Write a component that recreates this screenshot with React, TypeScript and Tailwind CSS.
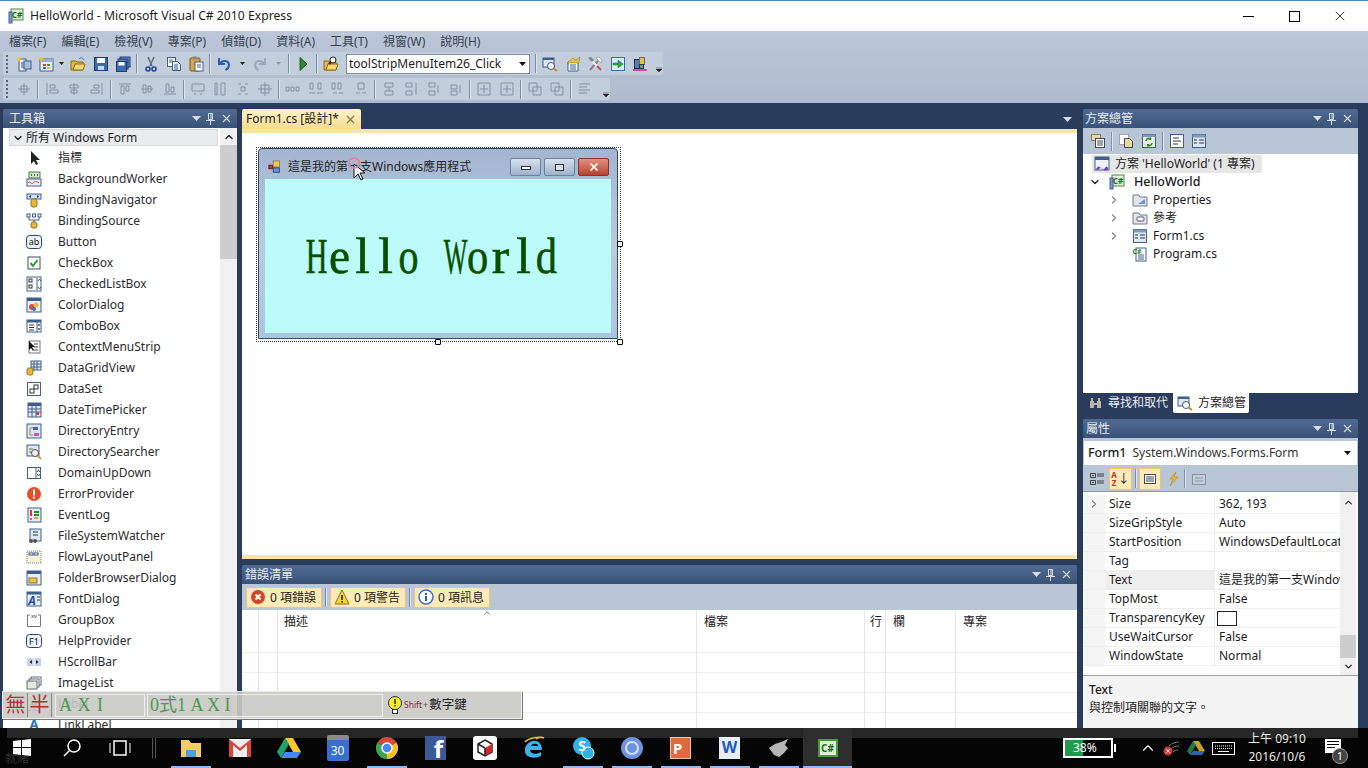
import React from "react";
import { ChevronDown, ChevronRight, ChevronUp, X } from "lucide-react";

const font = "font-['Noto_Sans','Noto_Sans_CJK_TC',sans-serif]";

// 16x16 glyphs for toolbox / toolbar items
function Glyph({ name, size = 16 }: { name: string; size?: number }) {
  const b = "#3f5f8a";
  const parts: Record<string, React.ReactNode> = {
    pointer: <path d="M5 1v13l3-3 2 4 2-1-2-4h4z" fill="#222" />,
    worker: <><rect x="3" y="1" width="11" height="6" fill="#cfe6c8" stroke="#5a7a5a" /><path d="M5 4h1M8 4h1M11 4h1" stroke="#2a8a2a" strokeWidth="2" /><rect x="1" y="8" width="14" height="7" fill="#eef" stroke={b} /><path d="M2 12c2-3 3 2 5 0s3-2 6 0" stroke="#d33" fill="none" /></>,
    nav: <><rect x="1" y="2" width="14" height="5" fill="#cfe0f5" stroke={b} /><path d="M5 3L3 4.500 5 6zM11 3l2 1.500L11 6z" fill="#234" /><rect x="5" y="7" width="6" height="8" rx="2" fill="#e5b93c" stroke="#94741b" /></>,
    source: <><path d="M3 3v4h10V3M8 7v3" stroke={b} fill="none" /><rect x="1" y="1" width="3" height="3" fill="#fff" stroke={b} /><rect x="6.500" y="1" width="3" height="3" fill="#fff" stroke={b} /><rect x="12" y="1" width="3" height="3" fill="#fff" stroke={b} /><rect x="5" y="9" width="6" height="6" rx="2" fill="#e5b93c" stroke="#94741b" /></>,
    button: <><rect x="0.500" y="1.500" width="15" height="13" rx="3" fill="#eef2f8" stroke="#27456e" /><text x="8" y="11" fontSize="9" textAnchor="middle" fill="#111">ab</text></>,
    check: <><rect x="2" y="2" width="12" height="12" fill="#fff" stroke="#3a4d6a" /><path d="M4.500 8l2.500 3 4.500-6" stroke="#2a9a2a" strokeWidth="2" fill="none" /></>,
    list: <><rect x="1" y="1" width="14" height="14" fill="#fff" stroke={b} /><rect x="3" y="3" width="3" height="3" fill="none" stroke="#333" /><rect x="3" y="9" width="3" height="3" fill="none" stroke="#333" /><path d="M11 2v12" stroke={b} /><path d="M12 5l1.500-2L15 5M12 11l1.500 2 1.500-2" stroke="#555" fill="none" /></>,
    color: <><rect x="1" y="1" width="14" height="14" fill="#e5edf8" stroke={b} /><rect x="1" y="1" width="14" height="3" fill={b} /><circle cx="6" cy="10" r="3" fill="#d84a3a" /><circle cx="10" cy="8" r="2.500" fill="#e8b83a" /><circle cx="8" cy="12" r="2" fill="#3a6fd8" /></>,
    combo: <><rect x="1" y="2" width="14" height="12" fill="#fff" stroke={b} /><rect x="1" y="2" width="14" height="2.500" fill={b} /><path d="M3 7h5M3 9.500h5M3 12h5" stroke="#333" /><path d="M11 4v10" stroke={b} /><path d="M12 8l1-2 1 2M12 10l1 2 1-2" stroke="#555" fill="none" /></>,
    context: <><rect x="3" y="2" width="11" height="12" fill="#fff" stroke="#777" /><path d="M8 5h4M8 8h4M8 11h4" stroke="#444" /><path d="M3 2v9l2-2 2 3 1-1-2-3h3z" fill="#111" /></>,
    grid: <><rect x="5" y="1" width="10" height="9" fill="#dfe8f5" stroke={b} /><path d="M5 4h10M5 7h10M8 1v9M11 1v9" stroke={b} /><rect x="1" y="8" width="6" height="7" rx="2" fill="#e5b93c" stroke="#94741b" /></>,
    dataset: <><rect x="1.500" y="1.500" width="13" height="13" fill="#fff" stroke={b} /><rect x="4" y="8" width="4" height="4" fill="#fff" stroke="#333" /><rect x="8" y="4" width="4" height="4" fill="#fff" stroke="#333" /></>,
    date: <><rect x="2" y="1" width="13" height="14" fill="#dde6f2" stroke={b} /><rect x="2" y="1" width="13" height="3" fill={b} /><path d="M2 7h13M2 10h13M6 4v11M10 4v11" stroke={b} /><rect x="10" y="10" width="3" height="3" fill="#d04a3a" /></>,
    entry: <><rect x="1" y="1" width="14" height="14" fill="#dbe7f7" stroke={b} /><path d="M4 5v7h3M7 5H4" stroke="#b4862a" fill="none" /><rect x="7" y="4" width="5" height="3" fill="#46a" /><rect x="8" y="10" width="5" height="3" fill="#b5c" /></>,
    searcher: <><rect x="1" y="1" width="12" height="11" fill="#dbe7f7" stroke={b} /><circle cx="9" cy="9" r="3.500" fill="#eef" stroke="#555" /><path d="M12 12l3 3" stroke="#c9a23b" strokeWidth="2" /><path d="M3 5h4M3 8h3" stroke="#8a6a20" /></>,
    updown: <><rect x="1.500" y="2.500" width="13" height="11" fill="#fff" stroke={b} /><path d="M10 3v10" stroke={b} /><path d="M11 7l1.500-2 1.500 2M11 9l1.500 2 1.500-2" stroke="#444" fill="none" /></>,
    error: <><circle cx="8" cy="8" r="7" fill="#e2502a" /><rect x="7" y="3.500" width="2" height="6" fill="#fff" /><rect x="7" y="10.500" width="2" height="2" fill="#fff" /></>,
    eventlog: <><rect x="2" y="1" width="13" height="14" fill="#e3ecf7" stroke={b} /><path d="M5 3v6" stroke="#d33" strokeWidth="2" /><circle cx="5" cy="12" r="1" fill="#d33" /><path d="M8 5h5M8 8h5" stroke="#2a8a2a" strokeWidth="2" /><path d="M8 11h4" stroke="#c9a23b" strokeWidth="2" /></>,
    watcher: <><rect x="4" y="1" width="11" height="12" fill="#dbe7f7" stroke={b} /><circle cx="5" cy="13" r="2" fill="#555" /><circle cx="9" cy="13" r="2" fill="#555" /><path d="M7 4h5M7 7h5" stroke="#333" /></>,
    flow: <><rect x="1" y="2" width="14" height="12" fill="#f3f3dd" stroke="#777" strokeDasharray="1 1" /><rect x="3" y="4" width="4" height="2" fill="#fff" stroke={b} /><rect x="8" y="4" width="4" height="2" fill="#fff" stroke={b} /></>,
    folder: <><rect x="1" y="1" width="14" height="14" fill="#e6eef8" stroke={b} /><rect x="1" y="1" width="14" height="3" fill={b} /><rect x="3" y="8" width="8" height="5" fill="#ecc654" stroke="#94741b" /></>,
    fontd: <><rect x="1" y="1" width="14" height="14" fill="#e6eef8" stroke={b} /><rect x="1" y="1" width="14" height="2.500" fill={b} /><text x="6" y="14" fontSize="12" fontWeight="700" fontStyle="italic" fill="#1b4fa8" textAnchor="middle">A</text><path d="M11 6h3M11 9h3" stroke="#333" /></>,
    group: <><path d="M4 3H1.500v11.500h13V3H12" stroke="#777" fill="none" /><text x="8" y="6" fontSize="6" textAnchor="middle" fill="#333">xv</text></>,
    help: <><rect x="0.500" y="1.500" width="15" height="13" rx="3" fill="#eef2f8" stroke="#27456e" /><text x="8" y="11.500" fontSize="9" textAnchor="middle" fill="#111">F1</text></>,
    hscroll: <><rect x="1" y="4" width="14" height="8" fill="#c5d4ea" /><path d="M6 6L3.500 8 6 10z" fill="#223" /><path d="M10 6l2.500 2L10 10z" fill="#223" /><path d="M8 4v8" stroke="#fff" /></>,
    images: <><rect x="5" y="2" width="10" height="8" fill="#fff" stroke="#667" /><rect x="3" y="4" width="10" height="8" fill="#fff" stroke="#667" /><rect x="1" y="6" width="10" height="8" fill="#e4eedd" stroke="#667" /></>,
    link: <><text x="8" y="12" fontSize="13" fontWeight="700" textAnchor="middle" fill="#2a6fb8">A</text><path d="M2 14.500h12" stroke="#2a4f9a" /></>,
    newproj: <><rect x="3" y="3" width="7" height="12" fill="#e8eef6" stroke={b} /><rect x="8" y="5" width="7" height="8" fill="#a9bedc" stroke={b} /><path d="M5 7h3M5 9h3M5 11h3" stroke={b} /><path d="M3 0l1 2 2 1-2 1-1 2-1-2-2-1 2-1z" fill="#f2c220" /></>,
    addwin: <><rect x="2" y="3" width="13" height="12" fill="#e8edf5" stroke={b} /><rect x="2" y="3" width="13" height="3" fill="#9ab0cf" /><rect x="5" y="8" width="3" height="2" fill="#d33" /><rect x="9" y="8" width="3" height="2" fill="#3a9a3a" /><rect x="5" y="11" width="3" height="2" fill="#36c" /><rect x="9" y="11" width="3" height="2" fill="#e8b83a" /><path d="M3 0l1 2 2 1-2 1-1 2-1-2-2-1 2-1z" fill="#f2c220" /></>,
    open: <><path d="M1 5h5l1 1h6v8H1z" fill="#e6b63e" stroke="#8a6a18" /><path d="M3 14l2-6h10l-2 6z" fill="#f5d871" stroke="#8a6a18" /><path d="M9 3c2-2 4-1 5 1" stroke="#3a6fc4" fill="none" /></>,
    save: <><rect x="1.500" y="1.500" width="13" height="13" fill="#3e69b4" stroke="#1c3c78" /><rect x="4" y="2" width="8" height="5" fill="#fff" /><rect x="5" y="10" width="6" height="4" fill="#ccd6e6" /></>,
    saveall: <><rect x="5" y="1" width="10" height="10" fill="#6f8fc8" stroke="#1c3c78" /><rect x="3" y="3" width="10" height="10" fill="#5a7cbc" stroke="#1c3c78" /><rect x="1.500" y="5.500" width="10" height="10" fill="#3e69b4" stroke="#1c3c78" /><rect x="3.500" y="6" width="6" height="3.500" fill="#fff" /></>,
    cut: <><path d="M5 1l4 9M11 1L7 10" stroke="#667" strokeWidth="1.500" /><circle cx="5" cy="13" r="2" fill="none" stroke="#24408c" strokeWidth="1.500" /><circle cx="11" cy="13" r="2" fill="none" stroke="#24408c" strokeWidth="1.500" /></>,
    copy: <><rect x="1.500" y="1.500" width="8" height="9" fill="#fff" stroke={b} /><path d="M3 4h4M3 6h4" stroke={b} /><path d="M6.500 5.500h5l3 3v6h-8z" fill="#eef4fb" stroke={b} /><path d="M8 9h4M8 11h4M8 13h4" stroke={b} /></>,
    paste: <><rect x="2" y="2" width="10" height="13" rx="1" fill="#d4a84a" stroke="#7a5a18" /><rect x="5" y="0.500" width="4" height="3" fill="#888" /><rect x="7" y="6" width="8" height="9" fill="#fff" stroke={b} /><path d="M9 9h4M9 11h4" stroke={b} /></>,
    undo: <path d="M3 2v6h6M3.500 8C6 3.500 13 4 13 9c0 2.500-1.500 4-3.500 5" stroke="#2c5cb0" strokeWidth="2" fill="none" />,
    redo: <path d="M13 2v6H7M12.500 8C10 3.500 3 4 3 9c0 2.500 1.500 4 3.500 5" stroke="#9aa8bb" strokeWidth="2" fill="none" />,
    run: <path d="M5 1.500l7 6.500-7 6.500z" fill="#2f8a2f" stroke="#1c5c1c" />,
    find: <><path d="M1 5h5l1 1h6v8H1z" fill="#e6b63e" stroke="#8a6a18" /><path d="M3 14l2-6h10l-2 6z" fill="#f5d871" stroke="#8a6a18" /><circle cx="10" cy="4" r="3" fill="#fff" stroke="#222" /><path d="M8 6l-2 2" stroke="#222" strokeWidth="2" /></>,
    sol: <><rect x="1" y="2" width="11" height="9" fill="#dce6f4" stroke={b} /><rect x="1" y="2" width="11" height="2" fill={b} /><circle cx="9" cy="10" r="3.500" fill="#fff" stroke="#456" /><path d="M11.500 12.500L15 15" stroke="#c08a28" strokeWidth="2" /></>,
    props: <><path d="M3 6h10v9H3z" fill="#fff" stroke={b} /><path d="M5 9h6M5 11h6M5 13h6" stroke={b} /><path d="M2 7L8 2l3 2 4-3-1 6H9z" fill="#e5c04c" stroke="#8a6a18" strokeWidth="0.500" /></>,
    tools: <><path d="M3 14L11 5" stroke="#7f858d" strokeWidth="2" /><path d="M9 2l5 5 1-3-3-3z" fill="#eef0f2" stroke="#7f858d" strokeWidth="0.500" /><path d="M4 4L13 13" stroke="#eef0f2" strokeWidth="2" /><path d="M10 10L14 14" stroke="#c2503f" strokeWidth="2" /><path d="M1 2l3-1 3 3-2 2z" fill="#7f858d" /></>,
    ext: <><rect x="1.500" y="1.500" width="13" height="13" fill="#dcefff" stroke="#3b6b9a" /><path d="M3 7h5V4l5 4-5 4V9H3z" fill="#27a83a" stroke="#14691f" strokeWidth="0.500" /></>,
    layers: <><rect x="2.500" y="3.500" width="5" height="9" fill="#4a7fc8" stroke="#234" /><rect x="7.500" y="1.500" width="5" height="7" fill="#e8bf3a" stroke="#765" /><rect x="7.500" y="8.500" width="4" height="4" fill="#5aa85a" stroke="#234" /><rect x="1" y="13" width="14" height="2" fill="#c84fae" /></>,
    app: <><rect x="1" y="6" width="4" height="4" fill="#c93d2f" stroke="#512" /><rect x="6" y="1" width="7" height="7" fill="#f2c84b" stroke="#876" /><rect x="6" y="9" width="7" height="5" fill="#6d93d4" stroke="#246" /></>,
    csproj: <><rect x="3" y="1" width="12" height="11" fill="#dff0d8" stroke="#4a8a3a" /><text x="9" y="10" fontSize="8" fontWeight="700" textAnchor="middle" fill="#1d6b1d">C#</text><rect x="1" y="4" width="3" height="11" fill="#7d9cc9" stroke={b} /></>,
    solution: <><rect x="1" y="1" width="14" height="13" fill="#eef3fa" stroke={b} /><rect x="1" y="1" width="14" height="3" fill={b} /><path d="M2 13c2-3 3-3 4.500-1.500S10 14 11 12s2-2 3 0-3 3-4 2-3-3-4.500-1.500S3 15 2 13z" fill="#7d3fb8" /></>,
    pfolder: <><path d="M1 3h6l1 2h7v9H1z" fill="#dfe6ef" stroke="#778" /><path d="M6 12l7-5v5z" fill="#6c93d8" /></>,
    rfolder: <><path d="M1 3h6l1 2h7v9H1z" fill="#dfe6ef" stroke="#778" /><rect x="5" y="7" width="7" height="4" rx="1" fill="#fff" stroke="#556" /></>,
    form: <><rect x="1.500" y="1.500" width="13" height="13" fill="#dde8f6" stroke={b} /><rect x="1.500" y="1.500" width="13" height="3" fill="#7e9bc4" /><path d="M3 7h3M3 10h3M8 7h5M8 10h5" stroke="#334" /></>,
    cscode: <><rect x="4" y="2" width="10" height="13" fill="#fff" stroke={b} /><path d="M6 9h6M6 11h6M6 13h6" stroke={b} /><text x="5" y="8" fontSize="7" fontWeight="700" textAnchor="middle" fill="#1d7a1d">C#</text></>,
    slnprops: <><rect x="1.500" y="1.500" width="9" height="6" fill="#e8d9a8" stroke="#8a7a50" /><rect x="5.500" y="5.500" width="9" height="9" fill="#fff" stroke="#445" /><path d="M7 8h6M7 10h6M7 12h6" stroke="#445" /></>,
    showall: <><rect x="1.500" y="1.500" width="9" height="10" fill="#fff" stroke="#667" strokeDasharray="1 1" /><path d="M6.500 5.500h5l3 3v6h-8z" fill="#e9d9a0" stroke="#445" /></>,
    refresh: <><rect x="1.500" y="1.500" width="13" height="13" fill="#e8f0dc" stroke={b} /><rect x="1.500" y="1.500" width="13" height="2.500" fill="#7e9bc4" /><path d="M5 8a3 3 0 0 1 5-2M11 10a3 3 0 0 1-5 2" stroke="#2f8a2f" strokeWidth="1.500" fill="none" /><path d="M10 4v3H7M6 14v-3h3" fill="#2f8a2f" /></>,
    viewcode: <><rect x="1.500" y="1.500" width="13" height="13" fill="#fff" stroke={b} /><path d="M4 5h6M4 8h8M4 11h5" stroke="#334" /></>,
  };
  return (
    <svg width={size} height={size} viewBox="0 0 16 16" className="shrink-0">
      {parts[name]}
    </svg>
  );
}

// gray alignment glyphs of the second toolbar
function AlignGlyph({ d }: { d: string }) {
  return (
    <svg width="16" height="16" viewBox="0 0 16 16" className="shrink-0">
      <path d={d} stroke="#8491a3" fill="none" />
    </svg>
  );
}

function Sep() {
  return <div className="w-px h-[19px] bg-[#7f8ea3] border-r border-[#dfe5ee] shrink-0 box-content -mx-[1.500px]" />;
}

function Grip() {
  return (
    <div className="flex flex-col gap-[2px] w-[3px] shrink-0">
      {[0, 1, 2, 3, 4].map((i) => (
        <div key={i} className="w-[2px] h-[2px] bg-[#55657c]" />
      ))}
    </div>
  );
}

function Overflow({ cls }: { cls: string }) {
  return (
    <svg width="6" height="6" viewBox="0 0 6 6" className={`self-end mb-[2px] ${cls}`}>
      <path d="M0 0h6M0 2h6L3 5z" fill="#222" stroke="#222" strokeWidth="0.500" />
    </svg>
  );
}

function PanelTitle({ title, pad = "pl-[6px]" }: { title: string; pad?: string }) {
  return (
    <div className={`h-[19px] shrink-0 flex items-center pr-[4px] rounded-t-[2px] bg-gradient-to-b from-[#4f6a92] to-[#3a5278] text-[#e8edf4] text-[12px] ${pad}`}>
      <span className="flex-1 pt-[1px]">{title}</span>
      <svg width="9" height="5" viewBox="0 0 9 5" className="mr-[5px]"><path d="M0 0h9L4.500 5z" fill="#d5dde8" /></svg>
      <svg width="9" height="12" viewBox="0 0 9 12" className="mr-[5px]"><path d="M2.500 0.500h4v6h-4zM0 7.500h9M4.500 8v4M5 1v5" stroke="#d5dde8" fill="none" /></svg>
      <X size={13} className="text-[#d5dde8]" strokeWidth={2} />
    </div>
  );
}

const tools: [string, string][] = [
  ["pointer", "指標"], ["worker", "BackgroundWorker"], ["nav", "BindingNavigator"], ["source", "BindingSource"],
  ["button", "Button"], ["check", "CheckBox"], ["list", "CheckedListBox"], ["color", "ColorDialog"],
  ["combo", "ComboBox"], ["context", "ContextMenuStrip"], ["grid", "DataGridView"], ["dataset", "DataSet"],
  ["date", "DateTimePicker"], ["entry", "DirectoryEntry"], ["searcher", "DirectorySearcher"], ["updown", "DomainUpDown"],
  ["error", "ErrorProvider"], ["eventlog", "EventLog"], ["watcher", "FileSystemWatcher"], ["flow", "FlowLayoutPanel"],
  ["folder", "FolderBrowserDialog"], ["fontd", "FontDialog"], ["group", "GroupBox"], ["help", "HelpProvider"],
  ["hscroll", "HScrollBar"], ["images", "ImageList"], ["link", "Label"], ["link", "LinkLabel"],
];

const props: [string, string][] = [
  ["Size", "362, 193"], ["SizeGripStyle", "Auto"], ["StartPosition", "WindowsDefaultLocation"], ["Tag", ""],
  ["Text", "這是我的第一支Windows應用程式"], ["TopMost", "False"], ["TransparencyKey", ""], ["UseWaitCursor", "False"], ["WindowState", "Normal"],
];

const alignA = ["M2 8h12M8 2v12M5 5h6v6H5z"];
const alignB = ["M3 2v12M6 4h5v3H6zM6 9h8v3H6z", "M8 2v12M4 4h8v3H4zM5 9h6v3H5z", "M13 2v12M5 4h5v3H5zM2 9h8v3H2z"];
const alignC = ["M2 3h12M4 5h3v8H4zM9 5h3v5H9z", "M2 8h12M4 4h3v8H4zM9 5h3v6H9z", "M2 13h12M4 3h3v8H4zM9 6h3v5H9z"];
const alignD = ["M2 3h12v7H2zM4 13h2M10 13h2", "M3 2h2v12H3zM9 2h4v12H9z", "M3 3h3M10 3h3M3 13h3M10 13h3M6 6h4v4H6z", "M4 4h8v8H4zM8 1v14M1 8h14"];
const alignE = ["M1 6h3v4H1zM6 6h3v4H6zM11 6h3v4h-3z", "M2 2h3v6H2zM10 2h3v6h-3zM1 12h6M9 12h6", "M2 2h3v6H2zM8 2h3v6H8zM3 12h4M9 12h4", "M5 2h6v6H5zM3 12h4M9 12h4"];
const alignF = ["M4 2h8v4H4zM4 10h8v4H4zM8 6v4", "M3 2h6v4H3zM3 10h6v4H3zM13 2v12", "M3 2h6v4H3zM3 10h6v4H3zM12 4v8", "M3 4h6v4H3zM3 10h6v4H3zM12 4v8"];

function AlignRow({ list }: { list: string[] }) {
  return (
    <div className="flex items-center gap-[6.500px]">
      {list.map((d, i) => (
        <AlignGlyph key={i} d={d} />
      ))}
    </div>
  );
}

function Arrow({ color = "#222", cls = "" }: { color?: string; cls?: string }) {
  return (
    <svg width="5" height="3" viewBox="0 0 5 3" className={cls}>
      <path d="M0 0h5L2.500 3z" fill={color} />
    </svg>
  );
}

// form caption letters sit in fixed cells, like the monospaced serif in the picture
const hello: { c: string; cls: string }[] = [
  { c: "H", cls: "scale-x-[0.6]" },
  { c: "e", cls: "scale-x-[0.95]" },
  { c: "l", cls: "scale-x-[1.05]" },
  { c: "l", cls: "scale-x-[1.05]" },
  { c: "o", cls: "scale-x-[0.8]" },
  { c: "\u00a0", cls: "" },
  { c: "W", cls: "scale-x-[0.5]" },
  { c: "o", cls: "scale-x-[0.85]" },
  { c: "r", cls: "scale-x-[1.05]" },
  { c: "l", cls: "scale-x-[1.05]" },
  { c: "d", cls: "scale-x-[0.85]" },
];

function TaskIcon({ children, active, current }: { children: React.ReactNode; active?: boolean; current?: boolean }) {
  return (
    <div className={`w-[49px] h-[40px] flex items-center justify-center relative ${current ? "bg-[#2e2e2e]" : ""}`}>
      {children}
      {active && <div className={`absolute bottom-0 h-[2px] bg-[#8fb8f0] ${current ? "left-0 right-0" : "left-[5px] right-[4px]"}`} />}
    </div>
  );
}

export default function App() {
  return (
    <div lang="zh-TW" className={`w-[1368px] h-[768px] relative overflow-hidden flex flex-col bg-[#2a3c5c] text-[#1c1c1c] ${font}`}>
      {/* title bar */}
      <div className="h-[31px] shrink-0 bg-white border-t border-[#4f86c6] flex items-center pl-[8px] pr-[5px] text-[12.200px]">
        <Glyph name="csproj" />
        <span className="ml-[6px] flex-1">HelloWorld - Microsoft Visual C# 2010 Express</span>
        <div className="w-[46px] flex justify-center"><div className="w-[11px] h-px bg-black" /></div>
        <div className="w-[46px] flex justify-center"><div className="w-[11px] h-[11px] border border-black" /></div>
        <div className="w-[46px] flex justify-center"><X size={16} strokeWidth={1.200} className="text-black" /></div>
      </div>

      {/* menu + toolbars */}
      <div className="h-[72px] shrink-0 bg-gradient-to-b from-[#bcc7d8] to-[#aebbce] pt-[1px]">
        <div className="h-[19px] flex items-center gap-[15px] pl-[9px] text-[12px] text-[#333f50]">
          {["檔案(F)", "編輯(E)", "檢視(V)", "專案(P)", "偵錯(D)", "資料(A)", "工具(T)", "視窗(W)", "說明(H)"].map((m) => (
            <span key={m}>{m}</span>
          ))}
        </div>
        <div className="h-[23px] mt-[1px] ml-[3px] w-[660px] bg-[#c3cedd] rounded-[2px] flex items-center pl-[3px] gap-[6.500px]">
          <Grip />
          <Glyph name="newproj" />
          <Glyph name="addwin" />
          <Arrow cls="-ml-[2px]" />
          <Glyph name="open" />
          <Glyph name="save" />
          <Glyph name="saveall" />
          <Sep />
          <Glyph name="cut" />
          <Glyph name="copy" />
          <Glyph name="paste" />
          <Sep />
          <Glyph name="undo" />
          <Arrow cls="mx-[1px]" />
          <Glyph name="redo" />
          <Arrow color="#8c97a6" cls="ml-[1px] mr-[2px]" />
          <Sep />
          <Glyph name="run" />
          <Sep />
          <Glyph name="find" />
          <div className="w-[184px] h-[20px] bg-white border border-[#7f8ea3] flex items-center pl-[2px] text-[12px] ml-[1px] shrink-0">
            <span className="flex-1">toolStripMenuItem26_Click</span>
            <svg width="7" height="4" viewBox="0 0 7 4" className="mr-[3px]"><path d="M0 0h7L3.500 4z" fill="#111" /></svg>
          </div>
          <Sep />
          <Glyph name="sol" />
          <Glyph name="props" />
          <Glyph name="tools" />
          <Glyph name="ext" />
          <Glyph name="layers" />
          <Overflow cls="ml-[1px]" />
        </div>
        <div className="h-[22px] mt-[3px] ml-[3px] w-[607px] bg-[#c3cedd] rounded-[2px] flex items-center pl-[3px] gap-[6.500px]">
          <Grip />
          <AlignRow list={alignA} />
          <Sep />
          <AlignRow list={alignB} />
          <Sep />
          <AlignRow list={alignC} />
          <Sep />
          <AlignRow list={alignD} />
          <Sep />
          <AlignRow list={alignE} />
          <Sep />
          <AlignRow list={alignF} />
          <Sep />
          <AlignRow list={["M2 2h12v12H2zM8 4v8M4 8h8", "M2 2h12v12H2zM8 4v8M4 8h8"]} />
          <Sep />
          <AlignRow list={["M2 2h8v8H2zM6 6h8v8H6z", "M2 2h8v8H2zM6 6h8v8H6z"]} />
          <Sep />
          <AlignRow list={["M2 3h11M2 6h8M2 9h11M2 12h8"]} />
          <Overflow cls="ml-[3px]" />
        </div>
      </div>

      {/* dock area */}
      <div className="flex-1 min-h-0 flex pl-[3px] pt-[6px] pr-[10px] gap-[5px]">
        {/* toolbox */}
        <div className="w-[234px] shrink-0 flex flex-col">
          <PanelTitle title="工具箱" />
          <div className="flex-1 min-h-0 bg-white flex relative overflow-hidden">
            <div className="flex-1 min-w-0 pt-[1px]">
              <div className="ml-[6px] mr-[2px] h-[17px] bg-[#e8ecee] border border-[#d5d9dd] flex items-center text-[12px]">
                <ChevronDown size={12} strokeWidth={2.500} className="ml-[2px] mr-[2px]" />
                所有 Windows Form
              </div>
              <div className="pt-[1px]">
                {tools.map(([icon, label], i) => (
                  <div key={i} className="h-[21px] flex items-center pl-[23px] text-[12px] text-[#2c2c2c]">
                    <Glyph name={icon} />
                    <span className="ml-[16px]">{label}</span>
                  </div>
                ))}
              </div>
            </div>
            <div className="w-[17px] shrink-0 bg-[#f0f0f0] flex flex-col items-center">
              <ChevronUp size={12} strokeWidth={2.500} className="mt-[3px] mb-[2px]" />
              <div className="w-full h-[114px] bg-[#cdcdcd]" />
            </div>
          </div>
        </div>

        {/* center column */}
        <div className="flex-1 min-w-0 flex flex-col mr-[1px]">
          <div className="h-[20px] shrink-0 flex items-end">
            <div className="w-[119px] h-[20px] bg-gradient-to-b from-[#fdf3c8] to-[#f8dc8f] rounded-t-[2px] flex items-center pl-[4px] text-[12px]">
              <span className="flex-1">Form1.cs [設計]*</span>
              <X size={13} strokeWidth={2.500} className="text-[#8a7a50] mr-[4px]" />
            </div>
            <div className="flex-1 flex justify-end items-center h-full pr-[5px]">
              <svg width="9" height="5" viewBox="0 0 9 5"><path d="M0 0h9L4.500 5z" fill="#d5dde8" /></svg>
            </div>
          </div>
          <div className="h-[4px] shrink-0 bg-[#f8e4a8]" />
          <div className="h-[422px] shrink-0 bg-white pl-[14px] pt-[14px]">
            {/* designed form with selection frame */}
            <div className="relative w-[365px] h-[195px] border border-dotted border-[#444] pl-[1px] pt-[0px] pr-[2px] pb-[2px]">
              <div className="w-full h-full rounded-t-[4px] border border-[#2f4a66] bg-gradient-to-b from-[#a4b6d0] via-[#b9cbdf] to-[#acc6df] flex flex-col px-[6px] pb-[5px]">
                <div className="h-[30px] shrink-0 flex items-center text-[12px] pl-[3px] text-[#222]">
                  <span className="mt-[5px]"><Glyph name="app" size={14} /></span>
                  <span className="ml-[6px] flex-1 pt-[5px]">這是我的第一支Windows應用程式</span>
                  <div className="w-[31px] h-[18px] mr-[3px] mt-[6px] rounded-[2px] border border-[#6f819b] bg-gradient-to-b from-[#d8e1ee] to-[#9fb2cd] flex items-center justify-center">
                    <div className="w-[10px] h-[4px] border border-[#333] bg-white mt-[2px]" />
                  </div>
                  <div className="w-[31px] h-[18px] mr-[3px] mt-[6px] rounded-[2px] border border-[#6f819b] bg-gradient-to-b from-[#d8e1ee] to-[#9fb2cd] flex items-center justify-center">
                    <div className="w-[9px] h-[7px] border border-[#333] bg-[#d8e1ee]" />
                  </div>
                  <div className="w-[31px] h-[18px] mr-[2px] mt-[6px] rounded-[2px] border border-[#7a3a30] bg-gradient-to-b from-[#e09080] to-[#b8402c] flex items-center justify-center">
                    <X size={12} strokeWidth={3.500} className="text-white" />
                  </div>
                </div>
                <div className="flex-1 bg-[#bbfcfb] flex items-center pl-[40px] font-['Liberation_Serif',serif] text-[50px] leading-none text-[#0a4f00] [-webkit-text-stroke:0.6px_#0a4f00]">
                  {hello.map((l, i) => (
                    <span key={i} className={`inline-block w-[23px] text-center shrink-0 ${l.cls}`}>
                      <span className="inline-block -mx-[10px]">{l.c}</span>
                    </span>
                  ))}
                </div>
              </div>
              <svg width="14" height="20" viewBox="0 0 14 20" className="absolute left-[96px] top-[15px]"><path d="M1 1v14l4-4 3 6 2-1-3-6h5z" fill="#fff" stroke="#111" /></svg>
              <div className="absolute left-[91px] top-[9px] w-[12px] h-[12px] rounded-full border-2 border-[#d88a9a]" />
              <div className="absolute -right-[3px] top-[93px] w-[6px] h-[6px] bg-white border border-black rounded-[1px]" />
              <div className="absolute left-[178px] -bottom-[4px] w-[6px] h-[6px] bg-white border border-black rounded-[1px]" />
              <div className="absolute -right-[3px] -bottom-[4px] w-[6px] h-[6px] bg-white border border-black rounded-[1px]" />
            </div>
          </div>
          <div className="h-[4px] shrink-0 bg-[#f8e4a8]" />
          <div className="h-[6px] shrink-0" />

          {/* error list */}
          <PanelTitle title="錯誤清單" pad="pl-[3px]" />
          <div className="h-[26px] shrink-0 bg-[#b9c6d6] flex items-center pl-[4px] gap-[3px] text-[12px]">
            <div className="h-[21px] w-[76px] bg-[#fdeab8] border border-[#e8c878] flex items-center pl-[3px] gap-[4px]">
              <svg width="16" height="16" viewBox="0 0 16 16"><circle cx="8" cy="8" r="7" fill="#d2452a" /><path d="M5.500 5.500l5 5M10.500 5.500l-5 5" stroke="#fff" strokeWidth="2" /></svg>
              <span className="pt-[1px]">0 項錯誤</span>
            </div>
            <div className="w-px h-[19px] bg-[#7f8ea3] border-r border-[#dfe5ee] box-content" />
            <div className="h-[21px] w-[76px] bg-[#fdeab8] border border-[#e8c878] flex items-center pl-[3px] gap-[4px]">
              <svg width="16" height="16" viewBox="0 0 16 16"><path d="M8 1l7 14H1z" fill="#f5d43a" stroke="#8a7420" /><rect x="7.200" y="6" width="1.600" height="5" fill="#222" /><rect x="7.200" y="12" width="1.600" height="1.500" fill="#222" /></svg>
              <span className="pt-[1px]">0 項警告</span>
            </div>
            <div className="w-px h-[19px] bg-[#7f8ea3] border-r border-[#dfe5ee] box-content" />
            <div className="h-[21px] w-[76px] bg-[#fdeab8] border border-[#e8c878] flex items-center pl-[3px] gap-[4px]">
              <svg width="16" height="16" viewBox="0 0 16 16"><circle cx="8" cy="8" r="7" fill="#fff" stroke="#3a6fc4" strokeWidth="1.500" /><rect x="7" y="7" width="2" height="5" fill="#2a5fb0" /><rect x="7" y="4" width="2" height="2" fill="#2a5fb0" /></svg>
              <span className="pt-[1px]">0 項訊息</span>
            </div>
          </div>
          <div className="flex-1 min-h-0 bg-white relative overflow-hidden">
            <div className="h-[43px] flex text-[12px] border-b border-[#eeeeee]">
              <div className="w-[17px] border-r border-[#e6e6e6]" />
              <div className="w-[19px] border-r border-[#e6e6e6]" />
              <div className="w-[419px] border-r border-[#e6e6e6] pl-[6px] pt-[3px] relative">
                描述
                <ChevronUp size={10} className="absolute left-[204px] -top-[2px] text-[#555]" />
              </div>
              <div className="w-[168px] border-r border-[#e6e6e6] pl-[7px] pt-[3px]">檔案</div>
              <div className="w-[21px] border-r border-[#e6e6e6] pl-[5px] pt-[3px]">行</div>
              <div className="w-[70px] border-r border-[#e6e6e6] pl-[7px] pt-[3px]">欄</div>
              <div className="flex-1 pl-[7px] pt-[3px]">專案</div>
            </div>
            {[0, 1, 2, 3].map((i) => (
              <div key={i} className="h-[20px] flex border-b border-[#eeeeee]">
                <div className="w-[17px] border-r border-[#e6e6e6]" />
                <div className="w-[19px] border-r border-[#e6e6e6]" />
                <div className="w-[419px] border-r border-[#e6e6e6]" />
                <div className="w-[168px] border-r border-[#e6e6e6]" />
                <div className="w-[21px] border-r border-[#e6e6e6]" />
                <div className="w-[70px] border-r border-[#e6e6e6]" />
              </div>
            ))}
          </div>
        </div>

        {/* right column */}
        <div className="w-[275px] shrink-0 flex flex-col">
          <PanelTitle title="方案總管" pad="pl-[2px]" />
          <div className="h-[26px] shrink-0 bg-[#b9c6d6] flex items-center pl-[7px] gap-[6.500px]">
            <Glyph name="slnprops" />
            <Sep />
            <Glyph name="showall" />
            <Glyph name="refresh" />
            <Sep />
            <Glyph name="viewcode" />
            <Glyph name="form" />
          </div>
          <div className="h-[239px] shrink-0 bg-white text-[12px]">
            <div className="h-[18px] mt-[1px] ml-[9px] w-[170px] bg-[#e6e6e6] flex items-center pl-[2px]">
              <Glyph name="solution" />
              <span className="ml-[5px]">方案 'HelloWorld' (1 專案)</span>
            </div>
            <div className="h-[18px] flex items-center pl-[6px]">
              <ChevronDown size={12} strokeWidth={2.500} />
              <span className="ml-[8px]"><Glyph name="csproj" /></span>
              <span className="ml-[9px] font-medium text-[12.500px]">HelloWorld</span>
            </div>
            {[["pfolder", "Properties"], ["rfolder", "參考"], ["form", "Form1.cs"]].map(([icon, label]) => (
              <div key={label} className="h-[18px] flex items-center pl-[25px]">
                <ChevronRight size={12} className="text-[#888]" strokeWidth={2.500} />
                <span className="ml-[12px]"><Glyph name={icon} /></span>
                <span className="ml-[5px]">{label}</span>
              </div>
            ))}
            <div className="h-[18px] flex items-center pl-[49px]">
              <Glyph name="cscode" />
              <span className="ml-[5px]">Program.cs</span>
            </div>
          </div>
          <div className="h-[20px] shrink-0 flex items-center text-[12px] text-[#e8edf4]">
            <svg width="14" height="14" viewBox="0 0 14 14" className="ml-[6px] mr-[5px]"><path d="M1 5h4v7H1zM8 5h4v7H8zM2 2h2v3H2zM9 2h2v3H9zM5 7h3v2H5z" fill="#b8b8a8" /></svg>
            <span className="w-[60px]">尋找和取代</span>
            <div className="h-[20px] ml-[5px] bg-white text-[#222] flex items-center pl-[4px] pr-[3px] gap-[5px] rounded-b-[2px]">
              <Glyph name="sol" />
              方案總管
            </div>
          </div>
          <div className="h-[6px] shrink-0" />

          <PanelTitle title="屬性" pad="pl-[3px]" />
          <div className="h-[27px] shrink-0 bg-[#b9c6d6] pt-[3px] px-[1px]">
            <div className="h-[24px] bg-white flex items-center pl-[4px] text-[12px]">
              <span className="font-medium text-[12.500px]">Form1</span>
              <span className="ml-[6px] flex-1 text-[#333]">System.Windows.Forms.Form</span>
              <svg width="7" height="4" viewBox="0 0 7 4" className="mr-[6px]"><path d="M0 0h7L3.500 4z" fill="#111" /></svg>
            </div>
          </div>
          <div className="h-[27px] shrink-0 bg-[#b9c6d6] flex items-center pl-[6px] gap-[4px] pt-[1px] border-b border-[#8a98ab]">
            <svg width="16" height="16" viewBox="0 0 16 16"><path d="M1.500 2.500h5v4h-5zM1.500 9.500h5v4h-5zM8 3h7M8 5h7M8 10h7M8 12h7M3 4.500h2M3 11.500h2" stroke="#444" fill="none" /></svg>
            <div className="w-[23px] h-[22px] bg-[#fdeab8] border border-[#e8c878] flex items-center justify-center text-[8px] font-bold leading-[8px] text-[#b43a20]">
              <span className="text-center">A<br />Z</span>
              <span className="text-[#223] text-[12px] font-normal ml-[1px]">↓</span>
            </div>
            <Sep />
            <div className="w-[22px] h-[22px] bg-[#fdeab8] border border-[#e8c878] flex items-center justify-center">
              <svg width="14" height="14" viewBox="0 0 14 14"><rect x="1.500" y="2.500" width="11" height="9" fill="#fff" stroke="#445" /><path d="M3 5h8M3 7h8M3 9h8" stroke="#445" /></svg>
            </div>
            <svg width="14" height="16" viewBox="0 0 14 16" className="mx-[1px]"><path d="M10 1L4 8h3L4 15l8-9H8z" fill="#e6b63e" stroke="#b07a1a" strokeWidth="0.500" /></svg>
            <Sep />
            <svg width="16" height="16" viewBox="0 0 16 16" className="ml-[3px]"><rect x="1.500" y="3.500" width="13" height="10" fill="#c4ced9" stroke="#8a95a3" /><path d="M4 7h8M4 10h8" stroke="#8a95a3" /></svg>
          </div>
          <div className="h-[183px] shrink-0 bg-white flex text-[12px] overflow-hidden pr-[2px]">
            <div className="flex-1 min-w-0 pt-[3px]">
              {props.map(([k, v], i) => (
                <div key={k} className="h-[19px] flex border-b border-[#eeeeee]">
                  <div className="w-[22px] shrink-0 flex items-center justify-center bg-[#f5f5f5]">
                    {i === 0 && <ChevronRight size={12} strokeWidth={2.500} className="text-[#888]" />}
                  </div>
                  <div className={`w-[110px] shrink-0 flex items-center pl-[4px] border-r border-[#eeeeee] ${k === "Text" ? "bg-[#eeeeee]" : ""}`}>{k}</div>
                  <div className="flex-1 min-w-0 flex items-center pl-[4px] overflow-hidden whitespace-nowrap">
                    {k === "TransparencyKey" ? <div className="-ml-[2px] w-[20px] h-[15px] border border-[#222] bg-white" /> : v}
                  </div>
                </div>
              ))}
            </div>
            <div className="w-[16px] shrink-0 bg-[#f0f0f0] flex flex-col items-center">
              <ChevronUp size={11} strokeWidth={2.500} className="mt-[5px]" />
              <div className="w-full h-[23px] bg-[#cdcdcd] mt-[127px]" />
              <ChevronDown size={11} strokeWidth={2.500} className="mt-[3px]" />
            </div>
          </div>
          <div className="flex-1 min-h-0 bg-[#f4f4f4] border-t border-[#a4a4a4] pl-[6px] pt-[5px] text-[12px] leading-[18px]">
            <div className="font-medium">Text</div>
            <div>與控制項關聯的文字。</div>
          </div>
        </div>
      </div>

      {/* taskbar */}
      <div className="h-[40px] shrink-0 bg-[#050505] relative text-white">
        <div className="absolute left-[7px] right-[10px] top-0 h-[10px] bg-[#272727]" />
        <span className="absolute left-[5px] top-[22px] text-[12px] text-[#2e2e2e]">就緒</span>
        <div className="relative h-full flex items-center">
          <div className="w-[44px] flex justify-center">
            <svg width="20" height="20" viewBox="0 0 20 20"><path d="M1 3l8-1v7H1zM10 2l9-1v8h-9zM1 10h8v7l-8-1zM10 10h9v8l-9-1z" fill="#fff" /></svg>
          </div>
          <svg width="20" height="20" viewBox="0 0 20 20" className="ml-[18px]"><circle cx="12" cy="8" r="6" fill="none" stroke="#fff" strokeWidth="1.500" /><path d="M8 12l-6 6" stroke="#fff" strokeWidth="1.500" /></svg>
          <svg width="22" height="20" viewBox="0 0 22 20" className="ml-[27px]"><rect x="5" y="3" width="12" height="14" fill="none" stroke="#fff" strokeWidth="1.500" /><path d="M1 5v10M21 5v10" stroke="#fff" /></svg>
          <div className="w-px h-[20px] bg-[#555] ml-[21px]" />
          <div className="w-px h-[20px] bg-[#555] ml-[2px]" />
          <div className="ml-[10px] flex items-center">
            <TaskIcon active><svg width="22" height="22" viewBox="0 0 22 22"><path d="M1 3h8l2 3h10v14H1z" fill="#f2cc68" /><rect x="6" y="13" width="10" height="7" fill="#4aa3d8" /></svg></TaskIcon>
            <TaskIcon><svg width="22" height="18" viewBox="0 0 22 18"><rect width="22" height="18" fill="#eee" /><path d="M0 0l11 9 11-9v18h-4V6l-7 6-7-6v12H0z" fill="#d44638" /></svg></TaskIcon>
            <TaskIcon><svg width="24" height="22" viewBox="0 0 24 22"><path d="M8 1h8l8 14h-8z" fill="#f7c52c" /><path d="M8 1L0 15l4 6 8-14z" fill="#1fa463" /><path d="M4 21h16l4-6H8z" fill="#4688f4" /></svg></TaskIcon>
            <TaskIcon><div className="w-[22px] h-[26px] bg-[#3a6fd0] rounded-[2px] border-t-[5px] border-[#8a8a8a] text-[12px] leading-[21px] text-center">30</div></TaskIcon>
            <TaskIcon active><svg width="22" height="22" viewBox="0 0 22 22"><path d="M11 11L1.470 5.500A11 11 0 0 1 20.530 5.500Z" fill="#d64a3a" /><path d="M11 11L20.530 5.500A11 11 0 0 1 11 22Z" fill="#f2c11e" /><path d="M11 11L11 22A11 11 0 0 1 1.470 5.500Z" fill="#3aa757" /><circle cx="11" cy="11" r="5" fill="#4688f4" stroke="#fff" strokeWidth="1.500" /></svg></TaskIcon>
            <TaskIcon><div className="w-[21px] h-[24px] bg-[#3b5998] flex items-end justify-end pr-[3px] text-[24px] leading-[22px] font-bold overflow-hidden">f</div></TaskIcon>
            <TaskIcon><div className="w-[24px] h-[24px] bg-white rounded-[3px] flex items-center justify-center"><svg width="18" height="18" viewBox="0 0 18 18"><path d="M9 1l7 4v8l-7 4-7-4V5z" fill="#fff" stroke="#222" strokeWidth="1.500" /><path d="M9 9l7-4v8l-7 4z" fill="#d7262b" /><path d="M9 9L2 5M9 9v8" stroke="#222" strokeWidth="1.500" /></svg></div></TaskIcon>
            <TaskIcon><svg width="24" height="24" viewBox="0 0 24 24"><path d="M3 16C2 8 9 4 14 5c5 1 6 6 6 9H8c0 4 6 5 11 2v4c-6 3-15 2-16-4z" fill="#3fb0e8" /><path d="M9 10h7c0-3-6-3-7 0z" fill="#000" /><path d="M3 6c4-4 14-6 19-4-2-1-5-1-8 1" stroke="#f2c11e" strokeWidth="1.500" fill="none" /></svg></TaskIcon>
            <TaskIcon active><svg width="24" height="24" viewBox="0 0 24 24"><circle cx="11" cy="10" r="9" fill="#2eb3e8" /><circle cx="17" cy="17" r="6" fill="#2eb3e8" stroke="#fff" /><text x="11" y="15" fontSize="14" fontWeight="700" textAnchor="middle" fill="#fff">S</text></svg></TaskIcon>
            <TaskIcon active><svg width="22" height="22" viewBox="0 0 22 22"><circle cx="11" cy="11" r="11" fill="#6d93e0" /><circle cx="11" cy="11" r="6" fill="#6d93e0" stroke="#d6e2f8" strokeWidth="2" /></svg></TaskIcon>
            <TaskIcon active><div className="w-[21px] h-[22px] bg-[#dd6a3e] border border-[#f0c0a8] text-[15px] font-bold leading-[20px] pl-[2px]">P</div></TaskIcon>
            <TaskIcon active><div className="w-[21px] h-[22px] bg-[#e8eef8] text-[#1d5cb4] text-[16px] font-bold leading-[20px] text-center">W</div></TaskIcon>
            <TaskIcon active><svg width="22" height="20" viewBox="0 0 22 20"><path d="M1 10l6-4 6-2 7-3-3 6 3 3-4 5-5 4-5-2z" fill="#b5b5b5" /></svg></TaskIcon>
            <TaskIcon active current><div className="w-[20px] h-[18px] bg-[#dff0d8] border-2 border-[#4a9a3a] text-[#1d6b1d] text-[10px] font-bold leading-[14px] text-center">C#</div></TaskIcon>
          </div>
          <div className="flex-1" />
          <div className="w-[50px] h-[20px] border-[2px] border-white flex items-center text-[12px] relative mr-[1px]">
            <div className="absolute left-0 top-0 bottom-0 w-[18px] bg-[#1f9a4a]" />
            <span className="relative pl-[8px]">38%</span>
          </div>
          <div className="w-[2px] h-[8px] bg-white mr-[23px]" />
          <ChevronUp size={18} strokeWidth={1.500} className="mr-[6px]" />
          <svg width="18" height="16" viewBox="0 0 18 16" className="mr-[6px]"><path d="M6 6c3-3 7-4 10-4M8 9c2-2 5-3 8-3M10 12c1-1 3-2 5-2" stroke="#777" fill="none" /><circle cx="5" cy="11" r="4.500" fill="#d13438" /><path d="M3 9l4 4M7 9l-4 4" stroke="#fff" /></svg>
          <svg width="18" height="16" viewBox="0 0 18 16" className="mr-[7px]"><path d="M6 1h6l6 10h-6z" fill="#c9a227" /><path d="M6 1L0 11l3 4 6-10z" fill="#1a7f4b" /><path d="M3 15h12l3-4H6z" fill="#2c63b0" /></svg>
          <svg width="23" height="13" viewBox="0 0 23 13" className="mr-[12px]"><rect x="0.500" y="0.500" width="22" height="12" fill="none" stroke="#fff" /><path d="M3 4h17M3 6.500h17" stroke="#fff" strokeDasharray="1 1" /><path d="M6 9.500h11" stroke="#fff" /></svg>
          <div className="w-[60px] text-center text-[12px] leading-[18px] text-[#e8e8e8] mr-[18px]">
            <div>上午 09:10</div>
            <div>2016/10/6</div>
          </div>
          <div className="relative w-[16px] h-[14px] bg-white mr-[27px] -mt-[4px] px-[2px] pt-[2px]">
            <div className="h-[1px] bg-black mb-[2px]" />
            <div className="h-[1px] bg-black mb-[2px]" />
            <div className="h-[1px] w-[8px] bg-black" />
            <div className="absolute left-[7px] top-[9px] w-[16px] h-[16px] rounded-full bg-[#444] border border-[#999] text-[11px] leading-[14px] text-center text-white">1</div>
          </div>
        </div>
      </div>

      {/* IME bar floating over the lower left */}
      <div className="absolute left-[2px] top-[691px] w-[520px] h-[28px] bg-[#c9c9c5]/90 border border-[#eeeeee] shadow-[1px_1px_0_#777] flex items-center text-[#4b9a4b]">
        <div className="w-[24px] h-[24px] flex items-center justify-center text-[#a33] text-[20px] ml-[1px] border-r border-[#888]">無</div>
        <div className="w-[24px] h-[24px] flex items-center justify-center text-[#a33] text-[20px] border-r border-[#888]">半</div>
        <div className="w-[90px] h-[23px] border border-[#eee] ml-[3px] flex items-center pl-[3px] text-[18px] font-['Liberation_Serif',serif] tracking-[1px] whitespace-nowrap">A X I</div>
        <div className="w-[236px] h-[23px] border border-[#eee] ml-[2px] flex items-center pl-[2px] text-[18px] font-['Liberation_Serif','Noto_Sans_CJK_TC',serif] whitespace-nowrap">0式1 A X I</div>
        <svg width="16" height="18" viewBox="0 0 16 18" className="ml-[4px]"><circle cx="8" cy="7" r="6.500" fill="#f6ee2e" stroke="#333" /><rect x="7.200" y="3" width="1.600" height="5" fill="#333" /><rect x="7.200" y="9" width="1.600" height="1.500" fill="#333" /><rect x="5.500" y="13.500" width="5" height="4" fill="#fff" stroke="#333" /></svg>
        <span className="text-[8.500px] text-[#8a2a40] ml-[1px]">Shift</span>
        <span className="text-[9px] text-[#555] mx-[1px]">+</span>
        <span className="text-[12.500px] text-[#222]">數字鍵</span>
      </div>
    </div>
  );
}
